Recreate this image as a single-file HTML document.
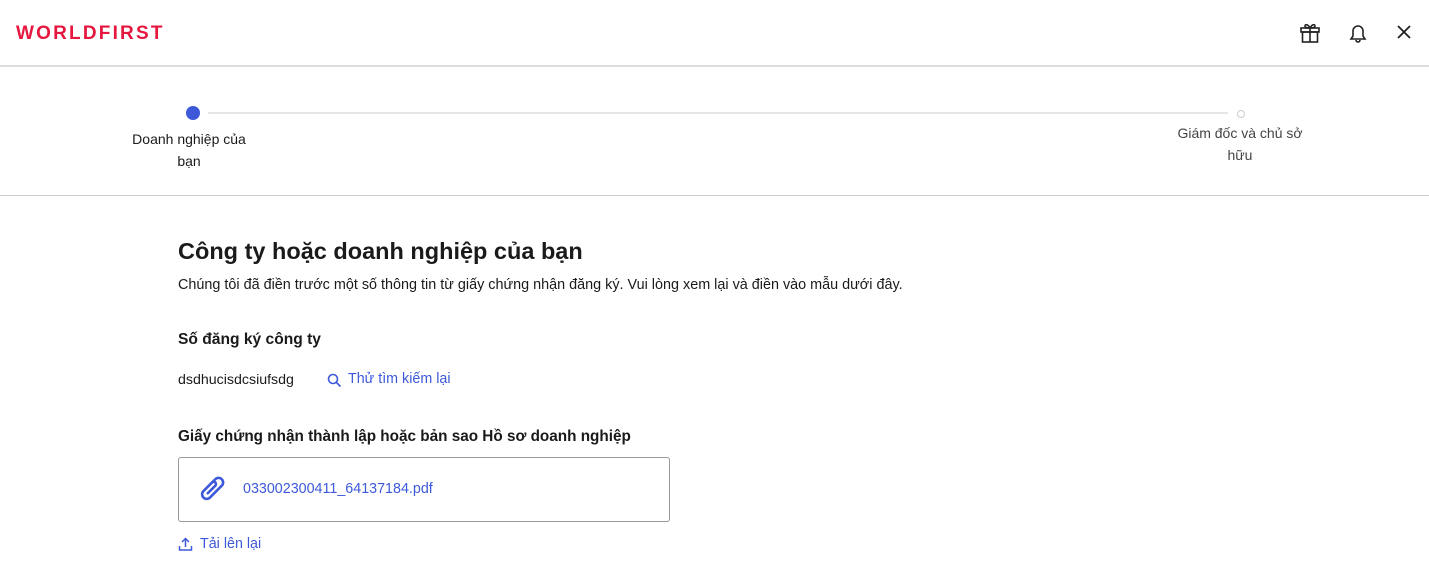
<!DOCTYPE html>
<html><head><meta charset="utf-8"><style>
*{margin:0;padding:0;box-sizing:border-box}
body{width:1429px;height:574px;overflow:hidden;background:#fff;font-family:"Liberation Sans","Noto Sans CJK SC",sans-serif;color:#1a1a1a;position:relative}
.a{position:absolute}
.blue{color:#3d59d9}
</style></head><body>
<div class="a" style="left:16px;top:23px;font-size:19px;font-weight:bold;color:#e5173f;letter-spacing:2.2px;font-family:'Liberation Sans',sans-serif">WORLDFIRST</div>
<svg class="a" style="left:1299px;top:22px" width="22" height="22" viewBox="0 0 22 22" fill="none" stroke="#222" stroke-width="1.6"><rect x="2" y="6" width="18" height="4"/><rect x="3.5" y="10" width="15" height="10"/><path d="M11 6v14M11 6C9 2 6 2 6 4s3 2 5 2M11 6c2-4 5-4 5-2s-3 2-5 2"/></svg>
<svg class="a" style="left:1347px;top:22px" width="22" height="22" viewBox="0 0 22 22" fill="none" stroke="#222" stroke-width="1.6"><path d="M4 17h14l-2-3V9a5 5 0 0 0-10 0v5z M9 18a2 2 0 0 0 4 0"/></svg>
<svg class="a" style="left:1396px;top:24px" width="16" height="16" viewBox="0 0 16 16" stroke="#222" stroke-width="1.8"><path d="M2 2l12 12M14 2L2 14"/></svg>
<div class="a" style="left:0;top:65px;width:1429px;height:2px;background:#ddd"></div>
<div class="a" style="left:208px;top:112px;width:1020px;height:2px;background:#e6e6e6"></div>
<div class="a" style="left:186px;top:106px;width:14px;height:14px;border-radius:50%;background:#3d59d9"></div>
<div class="a" style="left:1237px;top:110px;width:8px;height:8px;border-radius:50%;border:1px solid #ccc;background:#fff"></div>
<div class="a" style="left:119px;top:128px;width:140px;text-align:center;font-size:14px;line-height:22px">Doanh nghiệp của bạn</div>
<div class="a" style="left:1170px;top:122px;width:140px;text-align:center;font-size:14px;line-height:22px;color:#444">Giám đốc và chủ sở hữu</div>
<div class="a" style="left:0;top:195px;width:1429px;height:1px;background:#ccc"></div>
<div class="a" style="left:178px;top:238px;font-size:23.5px;font-weight:bold">Công ty hoặc doanh nghiệp của bạn</div>
<div class="a" style="left:178px;top:277px;font-size:14.4px">Chúng tôi đã điền trước một số thông tin từ giấy chứng nhận đăng ký. Vui lòng xem lại và điền vào mẫu dưới đây.</div>
<div class="a" style="left:178px;top:331px;font-size:15.6px;font-weight:bold">Số đăng ký công ty</div>
<div class="a" style="left:178px;top:372px;font-size:14.2px">dsdhucisdcsiufsdg</div>
<svg class="a" style="left:327px;top:373px" width="15" height="15" viewBox="0 0 15 15" fill="none" stroke="#3d59d9" stroke-width="1.6"><circle cx="6" cy="6" r="4.5"/><path d="M9.5 9.5l4 4"/></svg>
<div class="a blue" style="left:348px;top:371px;font-size:14.3px">Thử tìm kiếm lại</div>
<div class="a" style="left:178px;top:428px;font-size:15.3px;font-weight:bold">Giấy chứng nhận thành lập hoặc bản sao Hồ sơ doanh nghiệp</div>
<div class="a" style="left:178px;top:457px;width:492px;height:65px;border:1px solid #999;border-radius:3px"></div>
<svg class="a" style="left:197px;top:476px" width="28" height="28" viewBox="0 0 26 26" fill="none" stroke="#3d59d9" stroke-width="2.4" stroke-linecap="round"><path d="M14 6l3-3a4 4 0 0 1 6 6l-11 11a4 4 0 0 1-6-6l8-8a2 2 0 0 1 3 3l-7 7"/></svg>
<div class="a blue" style="left:243px;top:481px;font-size:14.3px">033002300411_64137184.pdf</div>
<svg class="a" style="left:178px;top:537px" width="15" height="15" viewBox="0 0 15 15" fill="none" stroke="#3d59d9" stroke-width="1.5"><path d="M7.5 10V2M4 5l3.5-3.5L11 5M1.5 9v4h12V9"/></svg>
<div class="a blue" style="left:200px;top:536px;font-size:14.3px">Tải lên lại</div>
</body></html>
